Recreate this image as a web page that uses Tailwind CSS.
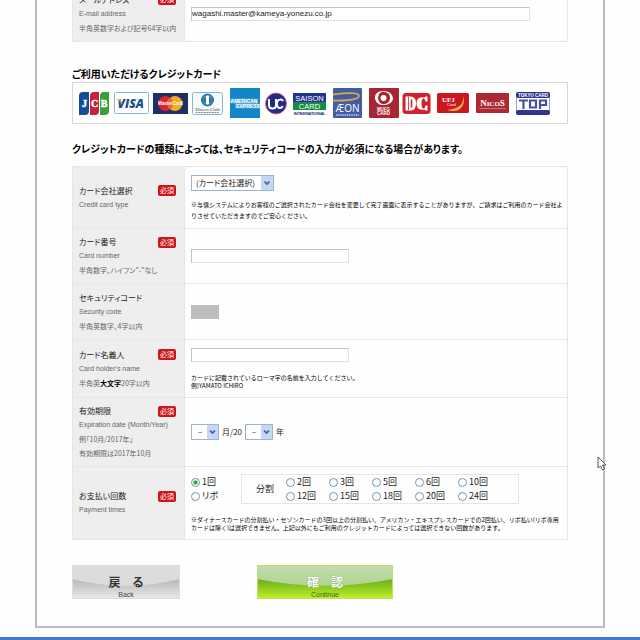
<!DOCTYPE html>
<html lang="ja">
<head>
<meta charset="utf-8">
<meta name="viewport" content="width=device-width, initial-scale=1">
<title>クレジットカード情報入力</title>
<script src="https://cdn.jsdelivr.net/npm/@tailwindcss/browser@4"></script>
</head>
<body class="overflow-hidden bg-[#fefefe] font-['Noto_Sans_CJK_JP',sans-serif] text-[#222] [font-feature-settings:'palt']">
<main class="mx-[35px] border-2 border-t-0 border-[#bbb] bg-[#fefefe] px-[35px] pb-[27px]">
<form onsubmit="return false">

  <section class="-mt-[15px] grid grid-cols-[112px_1fr] border border-[#e6e6e6]">
    <div class="flex h-[55px] flex-col justify-center border-r border-[#e6e6e6] bg-[#eeeeee] pl-1.5 text-[7px] leading-[14px] text-[#666]">
      <div class="flex items-center justify-between pr-2"><label for="email" class="text-[8px] text-[#222]">メールアドレス</label><span class="h-[11px] w-[18px] rounded-xs bg-[#d0121b] text-center text-[7px] leading-[11px] text-white">必須</span></div>
      <p class="font-['Liberation_Sans',sans-serif]">E-mail address</p>
      <p>半角英数字および記号64字以内</p>
    </div>
    <div class="flex items-center pl-1.5"><input id="email" type="text" value="wagashi.master@kameya-yonezu.co.jp" class="h-[14px] w-[339px] border border-[#e2e2e2] border-t-[#c4c4c4] border-l-[#c4c4c4] bg-white font-['Liberation_Sans',sans-serif] text-[8px] leading-[12px]"></div>
  </section>

  <h2 class="mt-[25px] text-[10px] leading-[14px] font-bold text-black">ご利用いただけるクレジットカード</h2>
  <div class="mt-px flex h-[42px] items-center border border-[#d8d8d8] bg-white pl-1.5">
    <svg role="img" aria-label="JCB" class="shrink-0" width="30" height="30" viewBox="0 0 30 30">
      <path d="M4 4h6v19a4 4 0 0 1-4 4H0V8a4 4 0 0 1 4-4z" fill="#134f98"/><path d="M14 4h6v19a4 4 0 0 1-4 4h-5V8a4 4 0 0 1 3-4z" fill="#c4213c"/><path d="M24 4h6v19a4 4 0 0 1-4 4h-5V8a4 4 0 0 1 3-4z" fill="#37a03a"/>
      <text x="5.500" y="19" text-anchor="middle" font-family="Liberation Serif" font-size="10" font-weight="700" fill="#fff" stroke="#fff" stroke-width=".5">J</text><text x="15.500" y="19" text-anchor="middle" font-family="Liberation Serif" font-size="10" font-weight="700" fill="#fff" stroke="#fff" stroke-width=".5">C</text><text x="25" y="19" text-anchor="middle" font-family="Liberation Serif" font-size="10" font-weight="700" fill="#fff" stroke="#fff" stroke-width=".5">B</text>
    </svg>
    <svg role="img" aria-label="VISA" class="ml-[5px] shrink-0" width="35" height="30" viewBox="0 0 35 30">
      <rect x=".5" y="4.500" width="34" height="21" rx="1" fill="#fff" stroke="#91b5d6"/>
      <text x="3.500" y="19.500" font-family="Open Sans" font-size="12" font-weight="800" font-style="italic" fill="#174f8f">VISA</text><path d="M3 11h3.500l1.500 4z" fill="#eba532"/>
    </svg>
    <svg role="img" aria-label="MasterCard" class="ml-1 shrink-0" width="35" height="30" viewBox="0 0 35 30">
      <rect y="5" width="35" height="21" fill="#1c3066"/><circle cx="12.500" cy="15.500" r="7.500" fill="#df2230"/><circle cx="22" cy="15.500" r="7.500" fill="#f3ac25"/><path d="M17.200 9.500a7.500 7.500 0 0 1 0 12 7.500 7.500 0 0 1 0-12" fill="#e86a28"/>
      <text x="17.500" y="17" text-anchor="middle" font-family="Liberation Sans" font-size="4.500" font-weight="700" fill="#fff">MasterCard</text>
    </svg>
    <svg role="img" aria-label="Diners Club" class="ml-1 shrink-0" width="31" height="30" viewBox="0 0 31 30">
      <rect x=".5" y="4.500" width="30" height="22" rx="2" fill="#f6fafb" stroke="#8bb5c8"/><circle cx="15.500" cy="12" r="5.500" fill="#fff" stroke="#2d76ad" stroke-width="2"/><path d="M14 8v8q-3-1-3-4t3-4zm3 0v8q3-1 3-4t-3-4z" fill="#2d76ad"/>
      <text x="15.500" y="22.500" text-anchor="middle" font-family="Liberation Serif" font-size="5" fill="#444">Diners Club</text><path d="M4 24.500h23" stroke="#777" stroke-width="1" stroke-dasharray="1 .6"/>
    </svg>
    <svg role="img" aria-label="American Express" class="ml-[7px] shrink-0" width="30" height="30" viewBox="0 0 30 30">
      <rect width="30" height="30" fill="#1485c6"/><path d="M0 10.500h28v5H0zM5 15.500h25v5H5z" fill="#4fa9da"/>
      <text x="14" y="15" text-anchor="middle" font-family="Liberation Sans" font-size="5" font-weight="700" fill="#fff">AMERICAN</text><text x="18" y="20" text-anchor="middle" font-family="Liberation Sans" font-size="5" font-weight="700" fill="#fff">EXPRESS</text>
    </svg>
    <svg role="img" aria-label="UC" class="ml-[5px] shrink-0" width="22" height="30" viewBox="0 0 22 30">
      <circle cx="11" cy="15.500" r="10.500" fill="#222a87" stroke="#d66582"/><path d="M4 11v6q0 3.500 3.500 3.500T11 17v-6M18 13q-1-2-3-1.500-3 .5-3 4.500t3 4q2 0 2.500-2" fill="none" stroke="#fff" stroke-width="2"/>
    </svg>
    <svg role="img" aria-label="SAISON CARD INTERNATIONAL" class="ml-[6px] shrink-0" width="33" height="30" viewBox="0 0 33 30">
      <rect y="5" width="33" height="9" fill="#20338d"/><rect y="14" width="33" height="8" fill="#178c43"/>
      <text x="16.500" y="12.500" text-anchor="middle" font-family="Liberation Sans" font-size="7.500" fill="#fff">SAISON</text><text x="16.500" y="20.700" text-anchor="middle" font-family="Liberation Sans" font-size="7.500" fill="#fff">CARD</text><text x="16.500" y="26.500" text-anchor="middle" font-family="Liberation Sans" font-size="4" fill="#293b88" stroke="#293b88" stroke-width=".2">INTERNATIONAL</text>
    </svg>
    <svg role="img" aria-label="AEON CREDIT SERVICE" class="ml-[7px] shrink-0" width="29" height="30" viewBox="0 0 29 30">
      <rect width="29" height="30" rx="1" fill="#425da5"/><path d="M0 6.500Q26 3 26 8 25 13 0 12.500" fill="none" stroke="#d8a842" stroke-width="1.800"/>
      <text x="14.500" y="24" text-anchor="middle" font-family="Open Sans" font-size="10" fill="#fff">ÆON</text><path d="M3 27h23" stroke="#c5cfe8" stroke-width="1.500" stroke-dasharray="1.200 .6"/>
    </svg>
    <svg role="img" aria-label="MUFG CARD" class="ml-[7px] shrink-0" width="30" height="30" viewBox="0 0 30 30">
      <rect width="30" height="30" rx="1" fill="#a72632"/><circle cx="14.500" cy="10" r="3" fill="#fff"/><path d="M12 3q-7 2-6 8 2 6 8 6-5-3-5-7t3-7zm5 0q4 3 4 7t-5 7q7-1 8-6 0-6-7-8z" fill="#fff"/><path d="M10 5a7 7 0 0 1 9 0M10 15a7 7 0 0 0 9 0" fill="none" stroke="#fff"/>
      <text x="14.500" y="22.500" text-anchor="middle" font-family="Liberation Sans" font-size="4.500" font-weight="700" fill="#fff">MUFG</text><text x="14.500" y="27" text-anchor="middle" font-family="Liberation Sans" font-size="4.500" font-weight="700" fill="#fff">CARD</text>
    </svg>
    <svg role="img" aria-label="DC" class="ml-[3px] shrink-0" width="29" height="30" viewBox="0 0 29 30">
      <rect x=".5" y="5" width="28" height="21" rx="3.500" fill="#d3202b"/><path d="M3.500 8.500H9q5 .5 5 7t-5 7H3.500z" fill="#fff"/><path d="M6.500 9v13" stroke="#d3202b" stroke-width=".8"/><path d="M9.500 11.500v8" stroke="#d3202b" stroke-width="1.600"/><path d="M25.500 8.500v5h-2q-.5-3-2-3-2 0-2 5t2 5q1.500 0 2-3h2v5h-2l-1-1q-8 1.500-8-6t8-6l1-1z" fill="#fff"/>
    </svg>
    <svg role="img" aria-label="UFJ Card" class="ml-[6px] shrink-0" width="32" height="30" viewBox="0 0 32 30">
      <rect y="5" width="32" height="20" rx="1.500" fill="#cd1720"/><path d="M26 8q2 12-16 14 14 4 17-8 0-4-1-6z" fill="#edae49"/>
      <text x="5" y="14" font-family="Liberation Serif" font-size="7" font-weight="700" fill="#fff">UFJ</text><text x="10" y="18" font-family="Liberation Sans" font-size="4" fill="#fff">Card</text>
    </svg>
    <svg role="img" aria-label="NICOS" class="ml-[7px] shrink-0" width="33" height="30" viewBox="0 0 33 30">
      <rect y="5" width="33" height="20" rx="1" fill="#ad2832"/><text x="16.500" y="17.500" text-anchor="middle" font-family="Liberation Serif" font-size="7" font-weight="700" fill="#fff"><tspan font-size="9">N</tspan>ICO<tspan font-size="9">S</tspan></text><path d="M3 20.500h27" stroke="#d89298" stroke-width=".7"/>
    </svg>
    <svg role="img" aria-label="TOKYU CARD TOP" class="ml-[7px] shrink-0" width="34" height="30" viewBox="0 0 34 30">
      <rect x=".5" y="4.500" width="33" height="22" rx="2" fill="#fff" stroke="#94a4ce"/><rect y="4" width="34" height="6" rx="2" fill="#2e3690"/><rect y="22" width="34" height="5" rx="2" fill="#2e3690"/>
      <text x="17" y="8.700" text-anchor="middle" font-family="Liberation Sans" font-size="4.500" font-weight="700" fill="#fff">TOKYU CARD</text>
      <path d="M3 12.500h9M7.500 12.500V21M14 12.500h6v7h-6zM24 21v-8.500h6V17h-6" fill="none" stroke="#4350a4" stroke-width="2.200"/>
    </svg>
  </div>

  <h2 class="mt-[18px] text-[10px] leading-[14px] font-bold text-black">クレジットカードの種類によっては、セキュリティコードの入力が必須になる場合があります。</h2>

  <section class="mt-[10px] divide-y divide-[#e6e6e6] border border-[#e6e6e6]">
    <div class="grid min-h-[62px] grid-cols-[112px_1fr]">
      <div class="flex flex-col justify-center border-r border-[#e6e6e6] bg-[#eeeeee] pl-1.5 text-[7px] leading-[14px] text-[#666]">
        <div class="flex items-center justify-between pr-2"><label for="company" class="text-[8px] text-[#222]">カード会社選択</label><span class="h-[11px] w-[18px] rounded-xs bg-[#d0121b] text-center text-[7px] leading-[11px] text-white">必須</span></div>
        <p class="font-['Liberation_Sans',sans-serif]">Credit card type</p>
      </div>
      <div class="flex flex-col justify-center pl-1.5">
        <div class="relative h-4 w-[83px]">
          <select id="company" class="block h-4 w-full appearance-none border border-[#9db4ca] bg-white pl-1 text-[8px] leading-[14px]"><option>(カード会社選択)</option></select>
          <svg class="pointer-events-none absolute top-px right-px" width="12" height="14" viewBox="0 0 12 14"><rect width="12" height="14" rx="1" fill="#c6d6f8"/><path d="M3.500 5.500 6 8l2.500-2.500" fill="none" stroke="#4a6089" stroke-width="1.700"/></svg>
        </div>
        <p class="mt-2 text-[6px] leading-[11px] text-black [font-feature-settings:normal]">※与信システムによりお客様のご選択されたカード会社を変更して完了画面に表示することがありますが、ご請求はご利用のカード会社よりさせていただきますのでご安心ください。</p>
      </div>
    </div>

    <div class="grid min-h-[55px] grid-cols-[112px_1fr]">
      <div class="flex flex-col justify-center border-r border-[#e6e6e6] bg-[#eeeeee] pl-1.5 text-[7px] leading-[14px] text-[#666]">
        <div class="flex items-center justify-between pr-2"><label for="number" class="text-[8px] text-[#222]">カード番号</label><span class="h-[11px] w-[18px] rounded-xs bg-[#d0121b] text-center text-[7px] leading-[11px] text-white">必須</span></div>
        <p class="font-['Liberation_Sans',sans-serif]">Card number</p>
        <p>半角数字、ハイフン"-"なし</p>
      </div>
      <div class="flex items-center pl-1.5"><input id="number" type="text" class="h-[14px] w-[158px] border border-[#e2e2e2] border-t-[#c4c4c4] border-l-[#c4c4c4] bg-white text-[9px]"></div>
    </div>

    <div class="grid min-h-[56px] grid-cols-[112px_1fr]">
      <div class="flex flex-col justify-center border-r border-[#e6e6e6] bg-[#eeeeee] pl-1.5 text-[7px] leading-[14px] text-[#666]">
        <label for="security" class="text-[8px] text-[#222]">セキュリティコード</label>
        <p class="font-['Liberation_Sans',sans-serif]">Security code</p>
        <p>半角英数字、4字以内</p>
      </div>
      <div class="flex items-center pl-1.5"><input id="security" type="text" disabled class="h-[14px] w-7 bg-[#bdbdbd] text-[9px]"></div>
    </div>

    <div class="grid min-h-[58px] grid-cols-[112px_1fr]">
      <div class="flex flex-col justify-center border-r border-[#e6e6e6] bg-[#eeeeee] pl-1.5 text-[7px] leading-[14px] text-[#666]">
        <div class="flex items-center justify-between pr-2"><label for="holder" class="text-[8px] text-[#222]">カード名義人</label><span class="h-[11px] w-[18px] rounded-xs bg-[#d0121b] text-center text-[7px] leading-[11px] text-white">必須</span></div>
        <p class="font-['Liberation_Sans',sans-serif]">Card holder's name</p>
        <p>半角英<b class="text-black">大文字</b>20字以内</p>
      </div>
      <div class="flex flex-col justify-center pl-1.5">
        <input id="holder" type="text" class="h-[14px] w-[158px] border border-[#e2e2e2] border-t-[#c4c4c4] border-l-[#c4c4c4] bg-white text-[9px]">
        <p class="mt-3 text-[6px] leading-[8px] text-black [font-feature-settings:normal]">カードに記載されているローマ字の名前を入力してください。<br>例)YAMATO ICHIRO</p>
      </div>
    </div>

    <div class="grid min-h-[69px] grid-cols-[112px_1fr]">
      <div class="flex flex-col justify-center border-r border-[#e6e6e6] bg-[#eeeeee] pl-1.5 text-[7px] leading-[14px] text-[#666]">
        <div class="flex items-center justify-between pr-2"><label for="month" class="text-[8px] text-[#222]">有効期限</label><span class="h-[11px] w-[18px] rounded-xs bg-[#d0121b] text-center text-[7px] leading-[11px] text-white">必須</span></div>
        <p class="font-['Liberation_Sans',sans-serif]">Expiration date (Month/Year)</p>
        <p>例「10月/2017年」</p>
        <p>有効期限は2017年10月</p>
      </div>
      <div class="flex items-center gap-[3px] pl-1.5 text-[8px] leading-4">
        <div class="relative h-4 w-7">
          <select id="month" class="block h-4 w-full appearance-none border border-[#9db4ca] bg-white pl-1.5 text-[8px] leading-[14px]"><option>–</option></select>
          <svg class="pointer-events-none absolute top-px right-px" width="11" height="14" viewBox="0 0 11 14"><rect width="11" height="14" rx="1" fill="#c6d6f8"/><path d="M3 5.500 5.500 8 8 5.500" fill="none" stroke="#4a6089" stroke-width="1.700"/></svg>
        </div>
        <label for="year">月/20</label>
        <div class="relative h-4 w-7">
          <select id="year" class="block h-4 w-full appearance-none border border-[#9db4ca] bg-white pl-1.5 text-[8px] leading-[14px]"><option>–</option></select>
          <svg class="pointer-events-none absolute top-px right-px" width="11" height="14" viewBox="0 0 11 14"><rect width="11" height="14" rx="1" fill="#c6d6f8"/><path d="M3 5.500 5.500 8 8 5.500" fill="none" stroke="#4a6089" stroke-width="1.700"/></svg>
        </div>
        <span>年</span>
      </div>
    </div>

    <div class="grid min-h-[72px] grid-cols-[112px_1fr]">
      <div class="flex flex-col justify-center border-r border-[#e6e6e6] bg-[#eeeeee] pl-1.5 text-[7px] leading-[14px] text-[#666]">
        <div class="flex items-center justify-between pr-2"><span class="text-[8px] text-[#222]">お支払い回数</span><span class="h-[11px] w-[18px] rounded-xs bg-[#d0121b] text-center text-[7px] leading-[11px] text-white">必須</span></div>
        <p class="font-['Liberation_Sans',sans-serif]">Payment times</p>
      </div>
      <div class="flex flex-col justify-center pl-1.5">
        <div class="flex items-center text-[9px] leading-[14px]">
          <div class="w-[50px]">
            <label class="flex items-center gap-0.5"><input type="radio" name="times" checked class="size-[9px] appearance-none rounded-full border border-[#6f96b0] bg-white checked:bg-[radial-gradient(circle,#21a121_1px,#fff_3px)]">1回</label>
            <label class="flex items-center gap-0.5"><input type="radio" name="times" class="size-[9px] appearance-none rounded-full border border-[#6f96b0] bg-white">リボ</label>
          </div>
          <div class="flex items-center border border-[#e6e6e6] pl-[14px]">
            <span class="w-[30px]">分割</span>
            <div class="grid grid-cols-[repeat(5,43px)] pr-[17px]">
              <label class="flex items-center gap-0.5"><input type="radio" name="times" class="size-[9px] appearance-none rounded-full border border-[#6f96b0] bg-white">2回</label>
              <label class="flex items-center gap-0.5"><input type="radio" name="times" class="size-[9px] appearance-none rounded-full border border-[#6f96b0] bg-white">3回</label>
              <label class="flex items-center gap-0.5"><input type="radio" name="times" class="size-[9px] appearance-none rounded-full border border-[#6f96b0] bg-white">5回</label>
              <label class="flex items-center gap-0.5"><input type="radio" name="times" class="size-[9px] appearance-none rounded-full border border-[#6f96b0] bg-white">6回</label>
              <label class="flex items-center gap-0.5"><input type="radio" name="times" class="size-[9px] appearance-none rounded-full border border-[#6f96b0] bg-white">10回</label>
              <label class="flex items-center gap-0.5"><input type="radio" name="times" class="size-[9px] appearance-none rounded-full border border-[#6f96b0] bg-white">12回</label>
              <label class="flex items-center gap-0.5"><input type="radio" name="times" class="size-[9px] appearance-none rounded-full border border-[#6f96b0] bg-white">15回</label>
              <label class="flex items-center gap-0.5"><input type="radio" name="times" class="size-[9px] appearance-none rounded-full border border-[#6f96b0] bg-white">18回</label>
              <label class="flex items-center gap-0.5"><input type="radio" name="times" class="size-[9px] appearance-none rounded-full border border-[#6f96b0] bg-white">20回</label>
              <label class="flex items-center gap-0.5"><input type="radio" name="times" class="size-[9px] appearance-none rounded-full border border-[#6f96b0] bg-white">24回</label>
            </div>
          </div>
        </div>
        <p class="mt-3 pr-2 text-[6px] leading-[8px] text-black [font-feature-settings:normal]">※ダイナースカードの分割払い・セゾンカードの3回以上の分割払い、アメリカン・エキスプレスカードでの2回払い、リボ払い(リボ専用カードは除く)は選択できません。上記以外にもご利用のクレジットカードによっては選択できない回数があります。</p>
      </div>
    </div>
  </section>

  <div class="mt-[25px] flex gap-[77px]">
    <button type="button" class="relative h-[34px] w-[108px] overflow-hidden border border-[#dcdcdc] bg-linear-to-b from-[#dedede] to-[#d8d8d8]">
      <svg class="absolute inset-0 size-full" viewBox="0 0 108 34" preserveAspectRatio="none" aria-hidden="true"><defs><linearGradient id="g1" x2="0" y2="1"><stop stop-color="#b8b8b8"/><stop offset="1" stop-color="#e8e8e8"/></linearGradient></defs><path d="M0 14Q54 28 108 14V34H0z" fill="url(#g1)"/></svg>
      <span class="absolute inset-x-0 top-2 text-[12px] leading-4 font-bold text-[#333]">戻　る</span><span class="absolute inset-x-0 bottom-0 font-['Liberation_Sans',sans-serif] text-[7px] leading-[7px] text-[#444]">Back</span>
    </button>
    <button type="submit" class="relative h-[34px] w-[136px] overflow-hidden border border-[#c5e060] bg-linear-to-b from-[#c3dbb0] to-[#a5cf78]">
      <svg class="absolute inset-0 size-full" viewBox="0 0 136 34" preserveAspectRatio="none" aria-hidden="true"><defs><linearGradient id="g2" x2="0" y2="1"><stop stop-color="#68ad18"/><stop offset="1" stop-color="#bdee28"/></linearGradient></defs><path d="M0 14Q68 28 136 14V34H0z" fill="url(#g2)"/></svg>
      <span class="absolute inset-x-0 top-2 text-[12px] leading-4 font-bold text-white text-shadow-[0_0_1px_#5b8030]">確　認</span><span class="absolute inset-x-0 bottom-0 font-['Liberation_Sans',sans-serif] text-[7px] leading-[7px] text-[#3f6a16]">Continue</span>
    </button>
  </div>
</form>
</main>
<div class="mt-[9px] h-1 bg-[#3f7ad3]"></div>
<svg class="pointer-events-none absolute top-[456px] left-[597px]" width="11" height="16" viewBox="0 0 11 16" aria-hidden="true"><path d="M1 1v11l2.500-2 2 4 2-1-2-4H9z" fill="#fff" stroke="#555"/></svg>
</body>
</html>
